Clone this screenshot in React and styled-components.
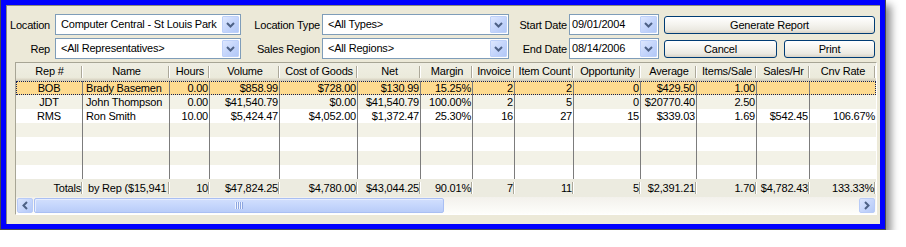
import React from 'react'
import styled, { createGlobalStyle, css } from 'styled-components'

const GlobalStyle = createGlobalStyle`
  html, body {
    margin: 0;
    padding: 0;
    background: #fff;
  }
  body {
    font-family: "Liberation Sans", Arial, sans-serif;
    font-size: 11px;
    letter-spacing: -0.2px;
    color: #000;
  }
`

const columns = [
  { title: 'Rep #', width: 67, align: 'center' },
  { title: 'Name', width: 87, align: 'left' },
  { title: 'Hours', width: 40 },
  { title: 'Volume', width: 70 },
  { title: 'Cost of Goods', width: 78 },
  { title: 'Net', width: 63 },
  { title: 'Margin', width: 52 },
  { title: 'Invoice', width: 42 },
  { title: 'Item Count', width: 59 },
  { title: 'Opportunity', width: 67 },
  { title: 'Average', width: 56 },
  { title: 'Items/Sale', width: 60 },
  { title: 'Sales/Hr', width: 53 },
  { title: 'Cnv Rate', width: 66 },
]

const gridCols = columns.map((c) => `${c.width}px`).join(' ')

const rows = [
  ['BOB', 'Brady Basemen', '0.00', '$858.99', '$728.00', '$130.99', '15.25%', '2', '2', '0', '$429.50', '1.00', '', ''],
  ['JDT', 'John Thompson', '0.00', '$41,540.79', '$0.00', '$41,540.79', '100.00%', '2', '5', '0', '$20770.40', '2.50', '', ''],
  ['RMS', 'Ron Smith', '10.00', '$5,424.47', '$4,052.00', '$1,372.47', '25.30%', '16', '27', '15', '$339.03', '1.69', '$542.45', '106.67%'],
  [], [], [], [],
]

const totals = ['Totals', 'by Rep ($15,941', '10', '$47,824.25', '$4,780.00', '$43,044.25', '90.01%', '7', '11', '5', '$2,391.21', '1.70', '$4,782.43', '133.33%']

const Window = styled.div`
  box-sizing: border-box;
  width: 886px;
  height: 231px;
  margin-top: -1px;
  padding: 5px;
  border: 1px solid #4b4b4b;
  background: #0000ff;
  box-shadow: 5px 6px 8px rgba(0, 0, 0, 0.45);
`

const Panel = styled.div`
  box-sizing: border-box;
  height: 100%;
  padding-top: 9px;
  background: #ece9d8;
  box-shadow: inset 1px 1px 0 #8d8b80;
`

const Filters = styled.div`
  display: grid;
  grid-template-columns: 49px 186px 81px 187px 60px 90px 216px;
  grid-template-rows: 21px 21px;
  row-gap: 3px;
`

const Label = styled.div`
  display: flex;
  align-items: center;
  justify-content: flex-end;
  padding-right: ${(p) => p.$pad || 3}px;
  white-space: nowrap;
`

const Combo = styled.div`
  box-sizing: border-box;
  display: flex;
  border: 1px solid #7f9db9;
  background: #fff;
`

const ComboText = styled.div`
  flex: 1;
  padding-left: ${(p) => p.$pad ?? 5}px;
  line-height: 19px;
  white-space: nowrap;
  overflow: hidden;
`

const DropButton = styled.div`
  box-sizing: border-box;
  width: 17px;
  margin: 1px;
  display: flex;
  align-items: center;
  justify-content: center;
  border: 1px solid #bdd0f9;
  border-radius: 1px;
  background: linear-gradient(135deg, #dde7fe 0%, #c3d4fb 55%, #b2c8f7 100%);
`

const ButtonCell = styled.div`
  display: flex;
  align-items: center;
  gap: 7px;
  padding-left: 5px;
`

const Button = styled.button`
  box-sizing: border-box;
  height: 18px;
  width: ${(p) => (p.$width ? `${p.$width}px` : 'auto')};
  flex: ${(p) => (p.$width ? 'none' : 1)};
  padding: 0;
  border: 1px solid #003c74;
  border-radius: 3px;
  background: linear-gradient(180deg, #ffffff 0%, #f5f4ef 45%, #ebe9e1 80%, #d8d2c6 100%);
  font-family: inherit;
  font-size: 11px;
  letter-spacing: inherit;
  color: #000;
`

const Table = styled.div`
  box-sizing: border-box;
  width: 862px;
  margin: 3px 0 0 9px;
  border: 1px solid;
  border-color: #a7a595 #ffffff #ffffff #a7a595;
  background: #fff;
`

const separator = css`
  background-image: linear-gradient(#aca899, #aca899), linear-gradient(#fff, #fff);
  background-repeat: no-repeat;
  background-size: 1px 12px, 1px 12px;
  background-position: right 1px top 3px, right 0 top 3px;
`

const HeaderRow = styled.div`
  display: grid;
  grid-template-columns: ${gridCols};
  height: 18px;
  background: linear-gradient(180deg, #efeee3 0%, #ebeadb 80%, #e2decd 88%, #d6d2c2 94%, #cbc7b8 100%);
`

const HeaderCell = styled.div`
  ${separator}
  text-align: center;
  line-height: 17px;
  white-space: nowrap;
  overflow: hidden;
`

const Row = styled.div`
  display: grid;
  grid-template-columns: ${gridCols};
  height: 14px;
  background: ${(p) => (p.$selected ? '#fedb90' : p.$alt ? '#f3f2e7' : '#ffffff')};
  ${(p) => p.$selected && css`
    outline: 1px dotted #10205a;
    outline-offset: -1px;
  `}
`

const Cell = styled.div`
  box-sizing: border-box;
  padding: ${(p) => (p.$align === 'left' ? '0 0 0 3px' : '0 1px')};
  text-align: ${(p) => p.$align || 'right'};
  line-height: 14px;
  white-space: nowrap;
  overflow: hidden;
  border-right: ${(p) => (p.$last ? 'none' : '1px solid #7c7c7c')};
`

const TotalsRow = styled.div`
  display: grid;
  grid-template-columns: ${gridCols};
  height: 18px;
  background: #ecebe0;
`

const TotalCell = styled.div`
  ${separator}
  box-sizing: border-box;
  padding: ${(p) => (p.$align === 'left' ? '0 0 0 5px' : '0 2px 0 0')};
  text-align: ${(p) => (p.$align === 'left' ? 'left' : 'right')};
  line-height: 18px;
  white-space: nowrap;
  overflow: hidden;
`

const ScrollBar = styled.div`
  display: flex;
  align-items: center;
  height: 17px;
  padding: 0 1px;
  background: linear-gradient(180deg, #f3f1ec 0%, #fefefb 100%);
`

const ScrollButton = styled.div`
  box-sizing: border-box;
  width: 16px;
  height: 15px;
  display: flex;
  align-items: center;
  justify-content: center;
  border: 1px solid #b8cbf7;
  border-radius: 2px;
  background: linear-gradient(135deg, #dbe5fd 0%, #c5d5fb 55%, #b4c9f7 100%);
`

const Thumb = styled.div`
  box-sizing: border-box;
  width: 410px;
  height: 15px;
  margin-left: 1px;
  display: flex;
  align-items: center;
  justify-content: center;
  border: 1px solid #a9bff3;
  border-radius: 2px;
  background: linear-gradient(180deg, #d2dffd 0%, #c5d6fc 50%, #b9ccf8 100%);
  box-shadow: inset 1px 1px 0 #e6edfe;
`

const Track = styled.div`
  flex: 1;
`

const ChevronDown = () => (
  <svg width="9" height="6" viewBox="0 0 9 6">
    <path d="M1 1 L4.5 4.5 L8 1" fill="none" stroke="#4d6185" strokeWidth="2" />
  </svg>
)

const Chevron = ({ dir }) => (
  <svg width="6" height="9" viewBox="0 0 6 9">
    <path
      d={dir === 'left' ? 'M5 1 L1.5 4.5 L5 8' : 'M1 1 L4.5 4.5 L1 8'}
      fill="none"
      stroke="#4d6185"
      strokeWidth="2"
    />
  </svg>
)

const Grip = () => (
  <svg width="8" height="7" viewBox="0 0 8 7">
    {[0, 2, 4, 6].map((x) => (
      <g key={x}>
        <rect x={x} y="0" width="1" height="7" fill="#eef3ff" />
        <rect x={x + 1} y="0" width="1" height="7" fill="#8ca5e0" />
      </g>
    ))}
  </svg>
)

const ComboBox = ({ value, pad }) => (
  <Combo>
    <ComboText $pad={pad}>{value}</ComboText>
    <DropButton>
      <ChevronDown />
    </DropButton>
  </Combo>
)

const App = () => (
  <>
    <GlobalStyle />
    <Window>
      <Panel>
        <Filters>
          <Label $pad={5}>Location</Label>
          <ComboBox value="Computer Central - St Louis Park" />
          <Label $pad={2}>Location Type</Label>
          <ComboBox value="<All Types>" />
          <Label $pad={2}>Start Date</Label>
          <ComboBox value="09/01/2004" pad={2} />
          <ButtonCell>
            <Button>Generate Report</Button>
          </ButtonCell>

          <Label $pad={5}>Rep</Label>
          <ComboBox value="<All Representatives>" />
          <Label $pad={2}>Sales Region</Label>
          <ComboBox value="<All Regions>" />
          <Label $pad={2}>End Date</Label>
          <ComboBox value="08/14/2006" pad={2} />
          <ButtonCell>
            <Button $width={113}>Cancel</Button>
            <Button>Print</Button>
          </ButtonCell>
        </Filters>

        <Table>
          <HeaderRow>
            {columns.map((c) => (
              <HeaderCell key={c.title}>{c.title}</HeaderCell>
            ))}
          </HeaderRow>
          {rows.map((r, i) => (
            <Row key={i} $selected={i === 0} $alt={i % 2 === 1}>
              {columns.map((c, j) => (
                <Cell key={c.title} $align={c.align} $last={j === columns.length - 1}>
                  {r[j] || ''}
                </Cell>
              ))}
            </Row>
          ))}
          <TotalsRow>
            {columns.map((c, j) => (
              <TotalCell key={c.title} $align={j === 1 ? 'left' : 'right'}>
                {totals[j]}
              </TotalCell>
            ))}
          </TotalsRow>
          <ScrollBar>
            <ScrollButton>
              <Chevron dir="left" />
            </ScrollButton>
            <Thumb>
              <Grip />
            </Thumb>
            <Track />
            <ScrollButton>
              <Chevron dir="right" />
            </ScrollButton>
          </ScrollBar>
        </Table>
      </Panel>
    </Window>
  </>
)

export default App
